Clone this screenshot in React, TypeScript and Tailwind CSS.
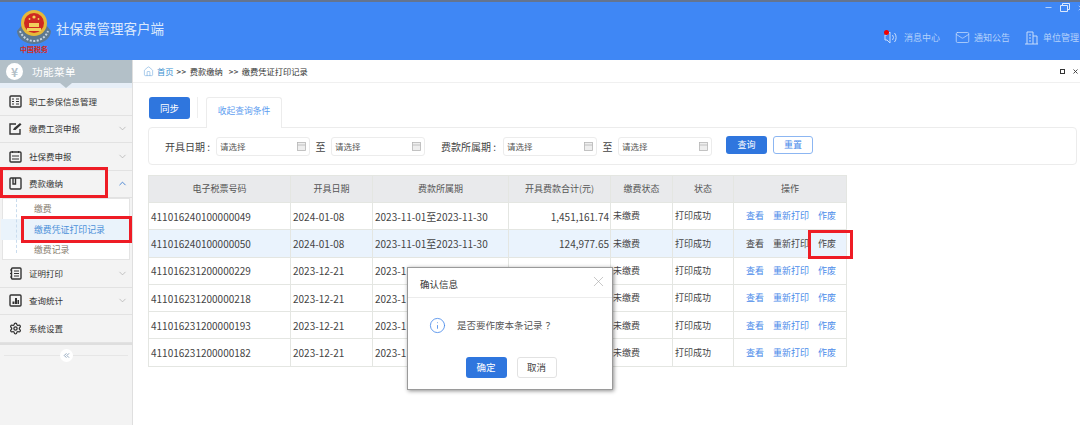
import { ChevronDown, ChevronUp, ChevronsLeft, House, Info, Mail, Minus, Settings, X } from 'lucide-react'

const font = { fontFamily: '"Noto Sans CJK SC", "Noto Sans", sans-serif' }

function Emblem() {
  return (
    <svg width="36" height="36" viewBox="0 0 36 36" className="shrink-0">
      <path d="M1 22c0 7 8 13 17 13s17-6 17-13l-5-6H6z" fill="#5d7890" />
      <path d="M4 22c2 6 8 10 14 10s12-4 14-10" fill="none" stroke="#c9d5df" strokeWidth="2" strokeDasharray="2 1.5" />
      <circle cx="18" cy="14" r="13" fill="#e6b93a" />
      <circle cx="18" cy="14" r="10" fill="#cf2a22" />
      <path d="M11 19h14v3H11zM13 14h10v4H13z" fill="#f1cf5c" />
      <circle cx="18" cy="8" r="1.6" fill="#f6d659" />
      <circle cx="13.5" cy="10" r="0.9" fill="#f6d659" />
      <circle cx="22.5" cy="10" r="0.9" fill="#f6d659" />
    </svg>
  )
}

function MenuIcon({ kind }: { kind: string }) {
  const common = { fill: 'none', stroke: '#333', strokeWidth: 1.4 }
  return (
    <svg width="13" height="13" viewBox="0 0 13 13" className="shrink-0">
      {kind === 'staff' && (
        <>
          <rect x="1" y="1" width="11" height="11" rx="1" {...common} />
          <path d="M3 4h2M3 6.5h2M3 9h2M7 4h3M7 6.5h3M7 9h3" {...common} strokeWidth={1} />
        </>
      )}
      {kind === 'wage' && (
        <>
          <path d="M11 7v5H1V2h6" {...common} />
          <path d="M4 8l1 -2 6 -5 1.5 1.5-6 5.5z" fill="#333" />
        </>
      )}
      {kind === 'social' && (
        <>
          <rect x="1" y="2" width="11" height="10" rx="1" {...common} />
          <path d="M3.5 1v2M9.5 1v2M3 6h7M3 9h7" {...common} strokeWidth={1} />
        </>
      )}
      {kind === 'pay' && (
        <>
          <rect x="1" y="1" width="11" height="11" rx="1" {...common} />
          <path d="M4 1v6h2.5V1" {...common} />
        </>
      )}
      {kind === 'cert' && (
        <>
          <rect x="2.5" y="1" width="9.5" height="11" rx="1" {...common} />
          <path d="M5 4h5M5 6.5h5M5 9h5M1 3h2M1 6.5h2M1 10h2" {...common} strokeWidth={1} />
        </>
      )}
      {kind === 'stat' && (
        <>
          <rect x="1" y="1" width="11" height="11" rx="1" {...common} />
          <path d="M3.5 10V7.5h2V10zM6 10V4h2v6zM8.5 10V6h1.5v4z" fill="#333" />
        </>
      )}
    </svg>
  )
}

function MenuItem({ kind, label, open, chevron = true }: { kind: string; label: string; open?: boolean; chevron?: boolean }) {
  return (
    <div className="h-[27.5px] flex items-center pl-[9px] pr-[4px] gap-[7px] border-b border-[#e2e2e2] text-[8.5px] text-[#333]">
      {kind === 'settings' ? <Settings size={13} strokeWidth={2.4} color="#333" className="shrink-0" /> : <MenuIcon kind={kind} />}
      <span className="flex-1">{label}</span>
      {chevron &&
        (open ? (
          <ChevronUp size={11} color="#3f7fd0" strokeWidth={2} />
        ) : (
          <ChevronDown size={11} color="#aaa" strokeWidth={1.5} />
        ))}
    </div>
  )
}

function Sidebar() {
  return (
    <aside className="w-[133px] shrink-0 bg-[#f3f3f3] border-r border-[#dfdfdf] flex flex-col">
      <div className="relative h-[23px] bg-[#b3c0c8] flex items-center pl-[6px] gap-[9px] shrink-0">
        <span className="w-[17px] h-[17px] rounded-full bg-white text-[#b3c0c8] text-[12px] font-bold flex items-center justify-center">¥</span>
        <span className="text-[10.5px] text-white tracking-[0.5px]">功能菜单</span>
        <span className="absolute left-[60px] top-[23px] border-x-[6px] border-x-transparent border-t-[5px] border-t-[#b3c0c8]" />
      </div>
      <div className="h-[5px] bg-[#e6eef7] shrink-0" />
      <div className="-mt-[5px] pt-[5px]">
        <MenuItem kind="staff" label="职工参保信息管理" chevron={false} />
        <MenuItem kind="wage" label="缴费工资申报" />
        <MenuItem kind="social" label="社保费申报" />
        <MenuItem kind="pay" label="费款缴纳" open />
      </div>
      <div className="relative mx-[2px] h-[62px] bg-white border border-[#e4e4e4] text-[8.9px] flex flex-col">
        <div className="h-[20px] pl-[31px] flex items-center text-[#8a8172]">缴费</div>
        <div className="h-[21px] pl-[33px] flex items-center text-[#4a90d9] bg-[#eaf3fb] -ml-[2px]">缴费凭证打印记录</div>
        <div className="h-[19px] pl-[31px] flex items-center text-[#8a8172]">缴费记录</div>
        <span className="absolute left-[13px] top-0 bottom-[6px] border-l border-dashed border-[#c9dcee]" />
      </div>
      <MenuItem kind="cert" label="证明打印" />
      <MenuItem kind="stat" label="查询统计" />
      <MenuItem kind="settings" label="系统设置" chevron={false} />
      <div className="h-[2px] bg-[#dedede]" />
      <div className="relative flex justify-center mt-[1px]">
        <span className="absolute left-[4px] right-[4px] top-[9px] border-t border-[#e6e6e6]" />
        <span className="relative w-[13px] h-[13px] mt-[3px] rounded-full bg-white flex items-center justify-center">
          <ChevronsLeft size={9} color="#8aa0b8" strokeWidth={2.5} />
        </span>
      </div>
    </aside>
  )
}

function Header() {
  return (
    <header className="relative h-[60px] bg-[#3f87f5] border-t-2 border-[#64748f] flex items-center shrink-0">
      <div className="relative w-[56px] h-full shrink-0 pl-[16px] pt-[7px]">
        <Emblem />
        <span className="absolute left-[20px] top-[42px] text-[7px] leading-[10px] font-bold text-[#d62a20] whitespace-nowrap">中国税务</span>
      </div>
      <h1 className="text-[13.5px] text-[#dce9fc] font-normal -mt-[6px]">社保费管理客户端</h1>
      <div className="ml-auto flex items-center mt-[13px] text-[9px] text-[#b5d2fb]">
        <span className="relative flex items-center gap-[6px] mr-[15px]">
          <svg width="14" height="15" viewBox="0 0 14 15" fill="none" stroke="#c7dcfb" strokeWidth="1">
            <path d="M1 5h2l3-3v11l-3-3H1zM8.5 5a4 4 0 0 1 0 5M10.5 3a7 7 0 0 1 0 9" />
          </svg>
          <span className="absolute left-[0px] top-[0px] w-[5px] h-[5px] rounded-full bg-[#f00000]" />
          消息中心
        </span>
        <span className="flex items-center gap-[4px] mr-[15px]">
          <Mail size={15} color="#c7dcfb" strokeWidth={1.2} />
          通知公告
        </span>
        <span className="flex items-center gap-[5px] mr-[1px]">
          <svg width="13" height="14" viewBox="0 0 13 14" fill="none" stroke="#c7dcfb" strokeWidth="1">
            <path d="M2 13V1h6v12M8 5h4v8M0 13h13M4 4h2M4 7h2M4 10h2" />
          </svg>
          单位管理
        </span>
      </div>
      <div className="absolute right-0 top-[1px] flex items-center gap-[7px] text-white">
        <Minus size={9} color="#dce9fc" />
        <svg width="10" height="9" viewBox="0 0 10 9" fill="none" stroke="#dce9fc" strokeWidth="1">
          <path d="M.5 2.5h7v6h-7zM2.5 2V.5h7v6H8" />
        </svg>
        <X size={8} color="#dce9fc" className="-mr-[5px]" />
      </div>
    </header>
  )
}

const rows = [
  ['411016240100000049', '2024-01-08', '2023-11-01至2023-11-30', '1,451,161.74'],
  ['411016240100000050', '2024-01-08', '2023-11-01至2023-11-30', '124,977.65'],
  ['411016231200000229', '2023-12-21', '2023-1', ''],
  ['411016231200000218', '2023-12-21', '2023-1', ''],
  ['411016231200000193', '2023-12-21', '2023-1', ''],
  ['411016231200000182', '2023-12-21', '2023-1', ''],
]

function DateInput() {
  return (
    <div className="w-[94px] h-[19px] border border-[#ececec] rounded-[3px] bg-white flex items-center pl-[3px] pr-[3px] text-[8.5px] text-[#555]">
      <span className="flex-1">请选择</span>
      <svg width="9" height="9" viewBox="0 0 9 9" fill="#eee" stroke="#b5b5b5" strokeWidth="0.8">
        <rect x="0.5" y="0.5" width="8" height="8" />
        <path d="M.5 3h8" />
      </svg>
    </div>
  )
}

function QueryBar() {
  return (
    <div className="ml-[15px] mr-[3px] h-[38px] border border-[#ececec] rounded-[4px] flex items-center text-[10px] text-[#444] -mt-px bg-white">
      <span className="ml-[16px] w-[51px] whitespace-nowrap">开具日期 :</span>
      <DateInput />
      <span className="w-[21px] text-center">至</span>
      <DateInput />
      <span className="ml-[16px] w-[62px] whitespace-nowrap">费款所属期 :</span>
      <DateInput />
      <span className="w-[21px] text-center">至</span>
      <DateInput />
      <button className="ml-[14px] w-[41px] h-[18px] rounded-[3px] bg-[#2f76de] text-white text-[9px] -mt-[2px]">查询</button>
      <button className="ml-[6px] w-[40px] h-[18px] rounded-[3px] border border-[#8cb6f2] bg-white text-[#4a8bea] text-[9px] -mt-[2px]">重置</button>
    </div>
  )
}

function DataTable() {
  const headers = ['电子税票号码', '开具日期', '费款所属期', '开具费款合计(元)', '缴费状态', '状态', '操作']
  const cell = 'border border-[#e4e6e2] px-[2px] whitespace-nowrap overflow-hidden'
  return (
    <table className="ml-[15px] mt-[10px] w-[698px] table-fixed border-collapse text-[10px] text-[#444]">
      <colgroup>
        <col className="w-[142px]" />
        <col className="w-[82px]" />
        <col className="w-[136px]" />
        <col className="w-[102px]" />
        <col className="w-[62px]" />
        <col className="w-[61px]" />
        <col className="w-[113px]" />
      </colgroup>
      <thead>
        <tr className="h-[27px] bg-[#e9eaec]">
          {headers.map((h) => (
            <th key={h} className={`${cell} font-normal text-[9px] text-[#555]`}>
              {h}
            </th>
          ))}
        </tr>
      </thead>
      <tbody>
        {rows.map((r, i) => {
          const hot = i === 1
          return (
            <tr key={r[0]} className={hot ? 'h-[27.3px] bg-[#eaf3fd]' : 'h-[27.3px] bg-white'}>
              <td className={cell}>{r[0]}</td>
              <td className={cell}>{r[1]}</td>
              <td className={cell}>{r[2]}</td>
              <td className={`${cell} text-right !pr-[1px]`}>{r[3]}</td>
              <td className={`${cell} text-[9px]`}>未缴费</td>
              <td className={`${cell} text-[9px]`}>打印成功</td>
              <td className={`${cell} text-[9px]`}>
                <div className={hot ? 'flex justify-between pl-[10px] pr-[8px] text-[#444]' : 'flex justify-between pl-[10px] pr-[8px] text-[#4a8bea]'}>
                  <span>查看</span>
                  <span>重新打印</span>
                  <span>作废</span>
                </div>
              </td>
            </tr>
          )
        })}
      </tbody>
    </table>
  )
}

function ConfirmDialog() {
  return (
    <div className="absolute left-[407px] top-[267px] w-[206px] h-[123px] bg-white border border-[#9a9a9a] shadow-[1px_1px_4px_rgba(0,0,0,0.45)] flex flex-col">
      <div className="h-[30px] flex items-center pl-[12px] pr-[5px] border-b border-[#ececec] text-[9.5px] text-[#333] shrink-0">
        <span className="flex-1 pt-[3px]">确认信息</span>
        <X size={17} color="#a8a8a8" strokeWidth={0.9} className="-mt-[3px]" />
      </div>
      <div className="flex items-center pl-[21px] gap-[11px] mt-[19px] text-[9.5px] text-[#555]">
        <Info size={17} color="#4a8bea" strokeWidth={1.2} />
        <span>
          是否要作废本条记录<span className="ml-[3px]">？</span>
        </span>
      </div>
      <div className="flex justify-center gap-[10px] mt-[23px] pl-[2px] text-[9.5px]">
        <button className="w-[41px] h-[21px] rounded-[3px] bg-[#2f76de] text-white">确定</button>
        <button className="w-[40px] h-[21px] rounded-[3px] border border-[#e2e2e2] bg-white text-[#444]">取消</button>
      </div>
    </div>
  )
}

export default function App() {
  return (
    <div className="relative w-[1080px] h-[425px] overflow-hidden bg-white flex flex-col" style={font}>
      <Header />
      <div className="flex flex-1 min-h-0">
        <Sidebar />
        <main className="flex-1 min-w-0 flex flex-col">
          <div className="h-[23px] flex items-center pl-[10px] pr-[1px] gap-[3px] border-b border-[#f0f0f0] text-[8.25px] text-[#333] shrink-0">
            <House size={11} color="#6aa5dc" strokeWidth={1.2} />
            <span className="text-[#3a8fd0]">首页</span>
            <span className="tracking-[0.5px]">&gt;&gt;</span>
            <span>费款缴纳</span>
            <span className="tracking-[0.5px] ml-[3px]">&gt;&gt;</span>
            <span>缴费凭证打印记录</span>
            <span className="ml-auto w-[5px] h-[5px] border border-[#333]" />
            <X size={7} color="#333" strokeWidth={3} className="ml-[4px]" />
          </div>
          <div className="flex items-start ml-[16px] mt-[14px] h-[31px] shrink-0">
            <button className="w-[41px] h-[22px] rounded-[3px] bg-[#2f76de] text-white text-[9.5px]">同步</button>
            <span className="w-px h-[21px] bg-[#eeeeee] ml-[7px] mr-[8px]" />
            <div className="w-[76px] h-[31px] border border-b-0 border-[#ececec] rounded-t-[3px] bg-white relative z-10 flex items-center justify-center text-[8.75px] text-[#5d9cf0] pb-[5px]">
              收起查询条件
            </div>
          </div>
          <QueryBar />
          <DataTable />
        </main>
      </div>
      <ConfirmDialog />
      <span className="absolute left-0 top-[167px] w-[108px] h-[31px] border-[3px] border-[#ee1c25]" />
      <span className="absolute left-[21px] top-[216px] w-[111px] h-[27px] border-[3px] border-[#ee1c25]" />
      <span className="absolute left-[808px] top-[230px] w-[45px] h-[29px] border-[3px] border-[#ee1c25]" />
    </div>
  )
}
